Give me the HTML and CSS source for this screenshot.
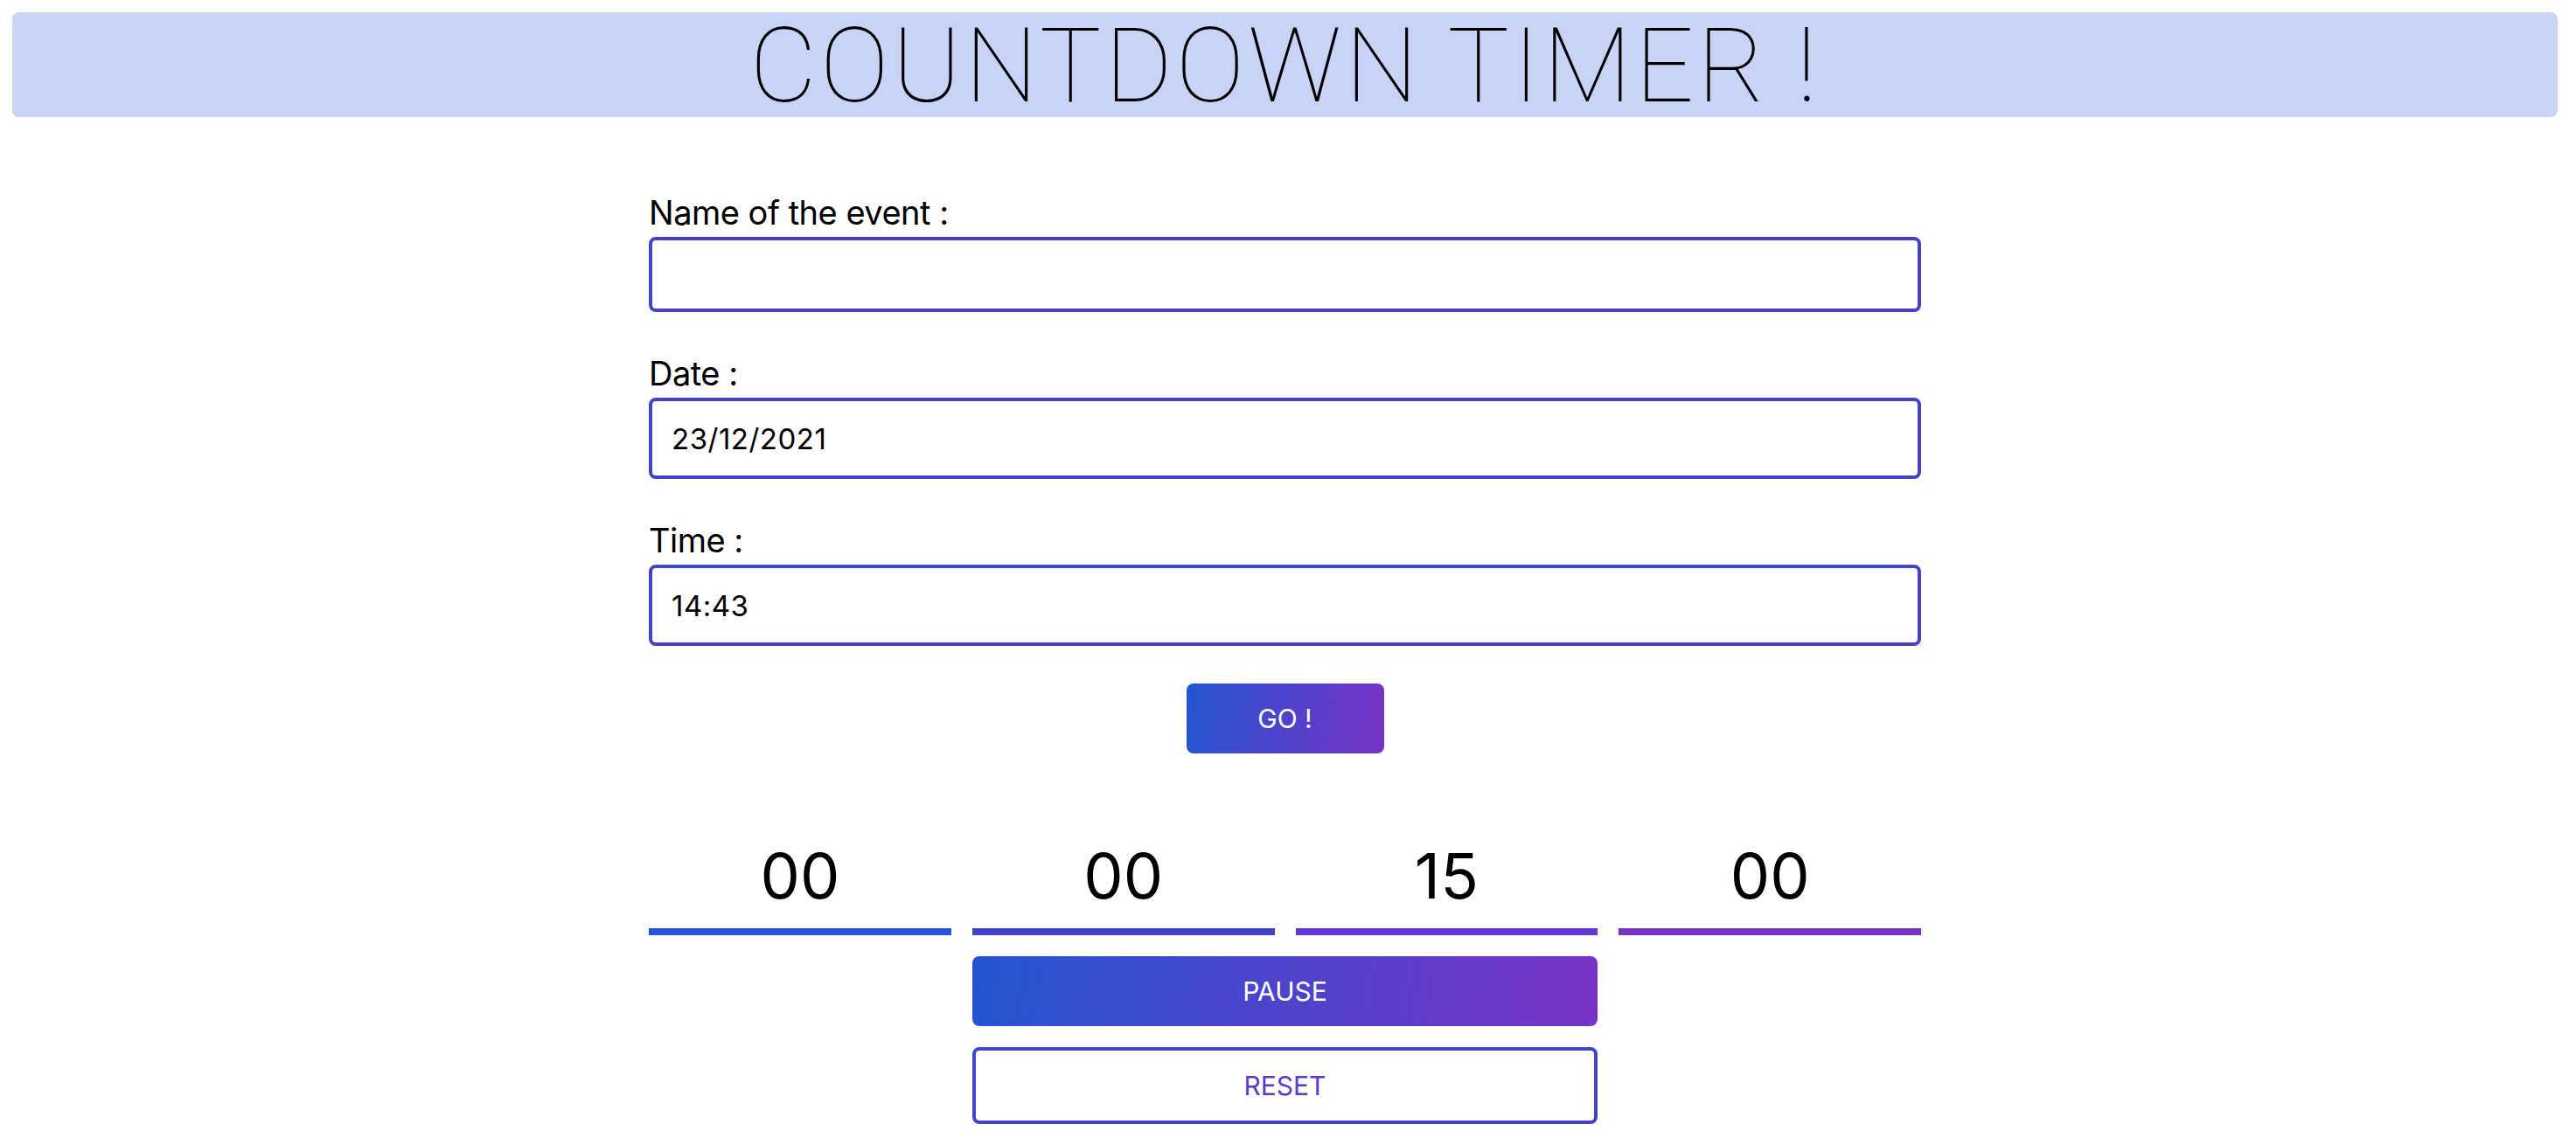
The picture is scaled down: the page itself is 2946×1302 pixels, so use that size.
FILE: index.html
```html
<!DOCTYPE html>
<html lang="en">
<head>
<meta charset="utf-8">
<title>Countdown Timer</title>
<link rel="stylesheet" href="styles.css">
</head>
<body>
<header class="banner">
  <h1 class="title">COUNTDOWN TIMER !</h1>
</header>
<main class="wrap">
  <form class="form">
    <label class="field">
      <span class="label">Name of the event :</span>
      <input class="input input-name" type="text" value="">
    </label>
    <label class="field">
      <span class="label">Date :</span>
      <input class="input input-tall" type="text" value="23/12/2021">
    </label>
    <label class="field">
      <span class="label">Time :</span>
      <input class="input input-tall" type="text" value="14:43">
    </label>
    <div class="go-row">
      <button class="btn btn-grad btn-go" type="button">GO !</button>
    </div>
  </form>
  <section class="timer">
    <div class="unit"><div class="num">00</div><div class="bar bar-1"></div></div>
    <div class="unit"><div class="num">00</div><div class="bar bar-2"></div></div>
    <div class="unit"><div class="num">15</div><div class="bar bar-3"></div></div>
    <div class="unit"><div class="num">00</div><div class="bar bar-4"></div></div>
  </section>
  <section class="controls">
    <button class="btn btn-grad btn-wide" type="button">PAUSE</button>
    <button class="btn btn-outline btn-wide" type="button">RESET</button>
  </section>
</main>
</body>
</html>
```
FILE: styles.css
```css
* { box-sizing: border-box; }

body {
  margin: 14px 21px 0 14px;
  font-family: Inter, "Noto Sans", "Liberation Sans", sans-serif;
  color: #000;
  background: #fff;
}

.banner {
  height: 120px;
  background: #c9d2f7;
  border-radius: 8px;
  display: flex;
  align-items: center;
  justify-content: center;
}

.title {
  margin: 0;
  font-family: Roboto, "Liberation Sans", sans-serif;
  font-weight: 100;
  font-size: 118px;
  line-height: 1;
  letter-spacing: 4px;
  padding-top: 4px;
}

.wrap {
  width: 1455px;
  margin: 0 auto;
}

.form {
  padding-top: 85px;
  display: flex;
  flex-direction: column;
  gap: 46px;
}

.field {
  display: flex;
  flex-direction: column;
  gap: 4px;
}

.label {
  font-size: 38px;
  line-height: 48px;
  letter-spacing: -0.5px;
}

.input {
  width: 100%;
  height: 86px;
  border: 4px solid #4343c5;
  border-radius: 8px;
  padding: 0 22px;
  font-family: Inter, "Noto Sans", sans-serif;
  font-size: 33px;
  letter-spacing: 0.5px;
  color: #000;
  background: #fff;
  outline: none;
}

.input-tall { height: 93px; }

.go-row {
  display: flex;
  justify-content: center;
  margin-top: -3px;
}

.btn {
  font-family: Inter, "Noto Sans", sans-serif;
  font-size: 30px;
  border-radius: 8px;
  cursor: pointer;
}

.btn-grad {
  border: none;
  color: #fff;
  background: linear-gradient(100deg, #2356d2 0%, #4a45cb 45%, #7832c4 100%);
}

.btn-go {
  width: 226px;
  height: 80px;
}

.timer {
  margin-top: 102px;
  display: grid;
  grid-template-columns: repeat(4, 1fr);
  column-gap: 24px;
}

.unit {
  display: flex;
  flex-direction: column;
  align-items: center;
}

.num {
  font-size: 72px;
  line-height: 72px;
  height: 72px;
  margin-top: 2px;
}

.bar {
  margin-top: 24px;
  width: 100%;
  height: 8px;
}

.bar-1 { background: #2356d2; }
.bar-2 { background: #4143c5; }
.bar-3 { background: #6238d0; }
.bar-4 { background: #7633c3; }

.controls {
  margin-top: 24px;
  display: grid;
  grid-template-columns: repeat(4, 1fr);
  column-gap: 24px;
  row-gap: 24px;
}

.btn-wide {
  grid-column: 2 / 4;
  height: 80px;
}

.btn-outline {
  height: 88px;
  background: #fff;
  border: 4px solid #4343c5;
  color: #5c3bcb;
}
```
